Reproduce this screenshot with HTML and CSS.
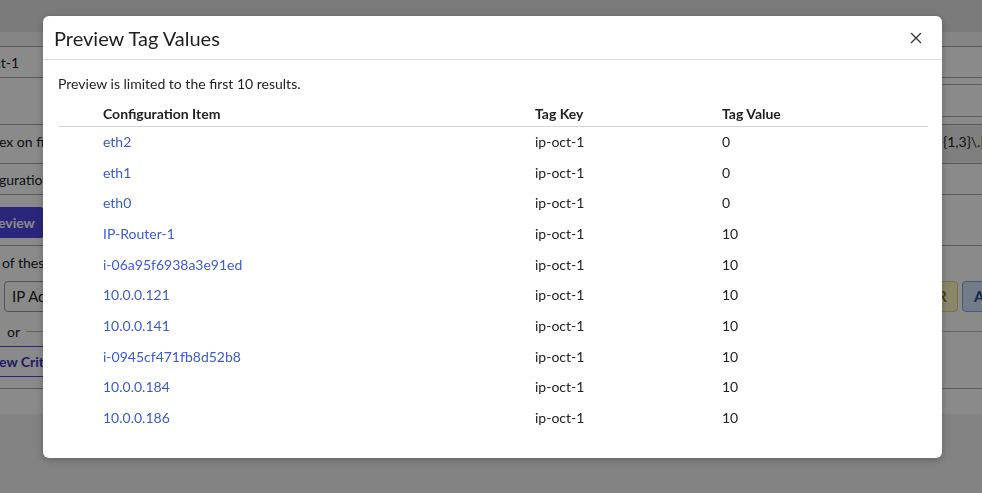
FILE: index.html
```html
<!DOCTYPE html>
<html lang="en">
<head>
<meta charset="utf-8">
<title>Preview Tag Values</title>
<link rel="stylesheet" href="styles.css">
</head>
<body>
<div class="page">
  <div class="topbar"></div>
  <div class="panel">
    <div class="strip"></div>
    <div class="row row-name"><span class="cut">ct-1</span></div>
    <div class="row row-gap"><span></span><span class="right-box"></span></div>
    <div class="row row-regex"><span class="cut0">ex on field</span><span class="regex-input">{1,3}\.[0-9]{1,3}</span></div>
    <div class="row row-ci"><span class="cut0">guration Item</span></div>
    <div class="btn-row"><span class="btn-primary">eview</span></div>
    <div class="sep"></div>
    <div class="text-row">of these</div>
    <div class="criteria-row">
      <span class="select">IP Address</span>
      <span class="chips"><span class="chip chip-or">OR</span><span class="chip chip-and">AND</span></span>
    </div>
    <div class="or-row"><span class="or">or</span><span class="or-line"></span></div>
    <div class="btn-row2"><span class="btn-outline">ew Criteria</span></div>
    <div class="panel-foot"></div>
  </div>
</div>

<div class="overlay">
  <div class="modal">
    <div class="modal-header">
      <h2 class="modal-title">Preview Tag Values</h2>
      <button class="close" aria-label="Close">
        <svg width="12" height="12" viewBox="0 0 12 12"><path d="M1.5 1.5 L10.5 10.5 M10.5 1.5 L1.5 10.5" stroke="#333" stroke-width="1.3" fill="none" stroke-linecap="round"/></svg>
      </button>
    </div>
    <div class="modal-body">
      <p class="note">Preview is limited to the first 10 results.</p>
      <table class="tags">
        <colgroup><col class="c0"><col class="c1"><col class="c2"><col class="c3"></colgroup>
        <thead>
          <tr><th></th><th>Configuration Item</th><th>Tag Key</th><th>Tag Value</th></tr>
        </thead>
        <tbody>
          <tr><td></td><td><a href="#">eth2</a></td><td>ip-oct-1</td><td>0</td></tr>
          <tr><td></td><td><a href="#">eth1</a></td><td>ip-oct-1</td><td>0</td></tr>
          <tr><td></td><td><a href="#">eth0</a></td><td>ip-oct-1</td><td>0</td></tr>
          <tr><td></td><td><a href="#">IP-Router-1</a></td><td>ip-oct-1</td><td>10</td></tr>
          <tr><td></td><td><a href="#">i-06a95f6938a3e91ed</a></td><td>ip-oct-1</td><td>10</td></tr>
          <tr><td></td><td><a href="#">10.0.0.121</a></td><td>ip-oct-1</td><td>10</td></tr>
          <tr><td></td><td><a href="#">10.0.0.141</a></td><td>ip-oct-1</td><td>10</td></tr>
          <tr><td></td><td><a href="#">i-0945cf471fb8d52b8</a></td><td>ip-oct-1</td><td>10</td></tr>
          <tr><td></td><td><a href="#">10.0.0.184</a></td><td>ip-oct-1</td><td>10</td></tr>
          <tr><td></td><td><a href="#">10.0.0.186</a></td><td>ip-oct-1</td><td>10</td></tr>
        </tbody>
      </table>
    </div>
  </div>
</div>
</body>
</html>
```

FILE: styles.css
```css
* { box-sizing: border-box; }
html, body { margin: 0; padding: 0; }
body {
  font-family: Lato, "Noto Sans", sans-serif;
  font-size: 14px;
  color: #222;
  width: 982px;
  height: 493px;
  overflow: hidden;
}

/* background page */
.page { background: #f1f1f1; height: 493px; overflow: hidden; }
.topbar { height: 32px; background: #e4e4e4; }
.panel { background: #fff; overflow: hidden; }
.strip { height: 15px; background: #f6f6f6; border-bottom: 1px solid #a8a8a8; }
.row {
  display: flex;
  justify-content: space-between;
  align-items: center;
  border-bottom: 1px solid #a8a8a8;
}
.row-name { height: 31px; }
.row-gap { height: 47px; align-items: flex-start; }
.right-box {
  margin-top: 6px;
  width: 60px;
  height: 33px;
  border-top: 1px solid #a8a8a8;
  border-bottom: 1px solid #a8a8a8;
}
.row-regex { height: 39px; align-items: stretch; }
.row-regex .cut0 { align-self: center; margin-top: -6px; }
.regex-input {
  background: #ebebeb;
  padding-top: 8px;
  padding-left: 0;
  width: 39px;
  white-space: nowrap;
  overflow: hidden;
  font-size: 14px;
}
.row-ci { height: 31px; }
.cut { margin-left: -6px; }
.cut0 { margin-left: -1px; }
.btn-row { padding-top: 12px; height: 50px; }
.btn-primary {
  display: inline-block;
  background: #4f46e5;
  color: #fff;
  font-weight: 700;
  height: 31px;
  line-height: 31px;
  padding: 0 9px 0 0;
  margin-left: -2px;
  border-radius: 0 4px 4px 0;
}
.sep { border-top: 1px solid #a8a8a8; height: 7px; }
.text-row { height: 28px; line-height: 22px; padding-left: 2px; }
.criteria-row {
  display: flex;
  justify-content: space-between;
  align-items: center;
  height: 32px;
}
.select {
  margin-left: 4px;
  height: 31px;
  line-height: 29px;
  width: 120px;
  border: 1px solid #9a9a9a;
  border-radius: 4px;
  padding-left: 7px;
  background: #fff;
  font-size: 15px;
}
.chips { display: flex; gap: 4px; margin-right: -34px; }
.chip {
  height: 31px;
  line-height: 29px;
  border-radius: 4px;
  padding: 0 6px;
  font-weight: 700;
  font-size: 15px;
}
.chip-or { background: #fdf7c4; border: 1px solid #e3d57a; color: #8a7a1c; width: 48px; text-align: right; padding: 0 10px 0 0; }
.chip-and { background: #d3e5fb; border: 1px solid #7aa8dc; color: #1d4f91; width: 54px; padding-left: 11px; }
.or-row { display: flex; align-items: center; height: 34px; padding-top: 5px; }
.or { padding-left: 7px; padding-right: 6px; }
.or-line { flex: 1; border-top: 1px solid #bbb; }
.btn-row2 { height: 42px; }
.btn-outline {
  display: block;
  width: 200px;
  height: 31px;
  line-height: 29px;
  border: 1px solid #4f46e5;
  border-left: none;
  color: #3b33b8;
  font-weight: 700;
  margin-left: -1px;
  border-radius: 0 4px 4px 0;
}
.panel-foot { height: 26px; border-top: 1px solid #a8a8a8; }

/* overlay + modal */
.overlay {
  position: fixed;
  inset: 0;
  background: rgba(0, 0, 0, 0.46);
  display: flex;
  justify-content: center;
  align-items: flex-start;
  padding-top: 16px;
  padding-left: 3px;
}
.modal {
  width: 899px;
  height: 442px;
  background: #fff;
  border-radius: 6px;
  box-shadow: 0 2px 8px rgba(0, 0, 0, 0.25);
  overflow: hidden;
}
.modal-header {
  height: 44px;
  display: flex;
  align-items: center;
  justify-content: space-between;
  padding: 0 20px 0 11px;
  border-bottom: 1px solid #dcdcdc;
}
.modal-title {
  margin: 0;
  font-size: 20px;
  font-weight: 400;
  color: #1e1e1e;
}
.close {
  border: none;
  background: none;
  padding: 0;
  width: 12px;
  height: 12px;
  display: flex;
}
.modal-body { padding: 14px 14px 0 15px; }
.note { margin: 0 0 8px; line-height: 20px; font-size: 14px; color: #222; }
.tags { width: 100%; border-collapse: collapse; table-layout: fixed; }
.c0 { width: 45px; }
.c1 { width: 432px; }
.c2 { width: 187px; }
.tags th {
  text-align: left;
  font-weight: 700;
  font-size: 14px;
  height: 24px;
  padding: 0;
  vertical-align: middle;
  border-bottom: 1px solid #d6d6d6;
  color: #222;
}
.tags td {
  height: 30.7px;
  padding: 0;
  vertical-align: middle;
  font-size: 14px;
  color: #222;
}
.tags a { color: #3b5bcf; text-decoration: none; }
```
